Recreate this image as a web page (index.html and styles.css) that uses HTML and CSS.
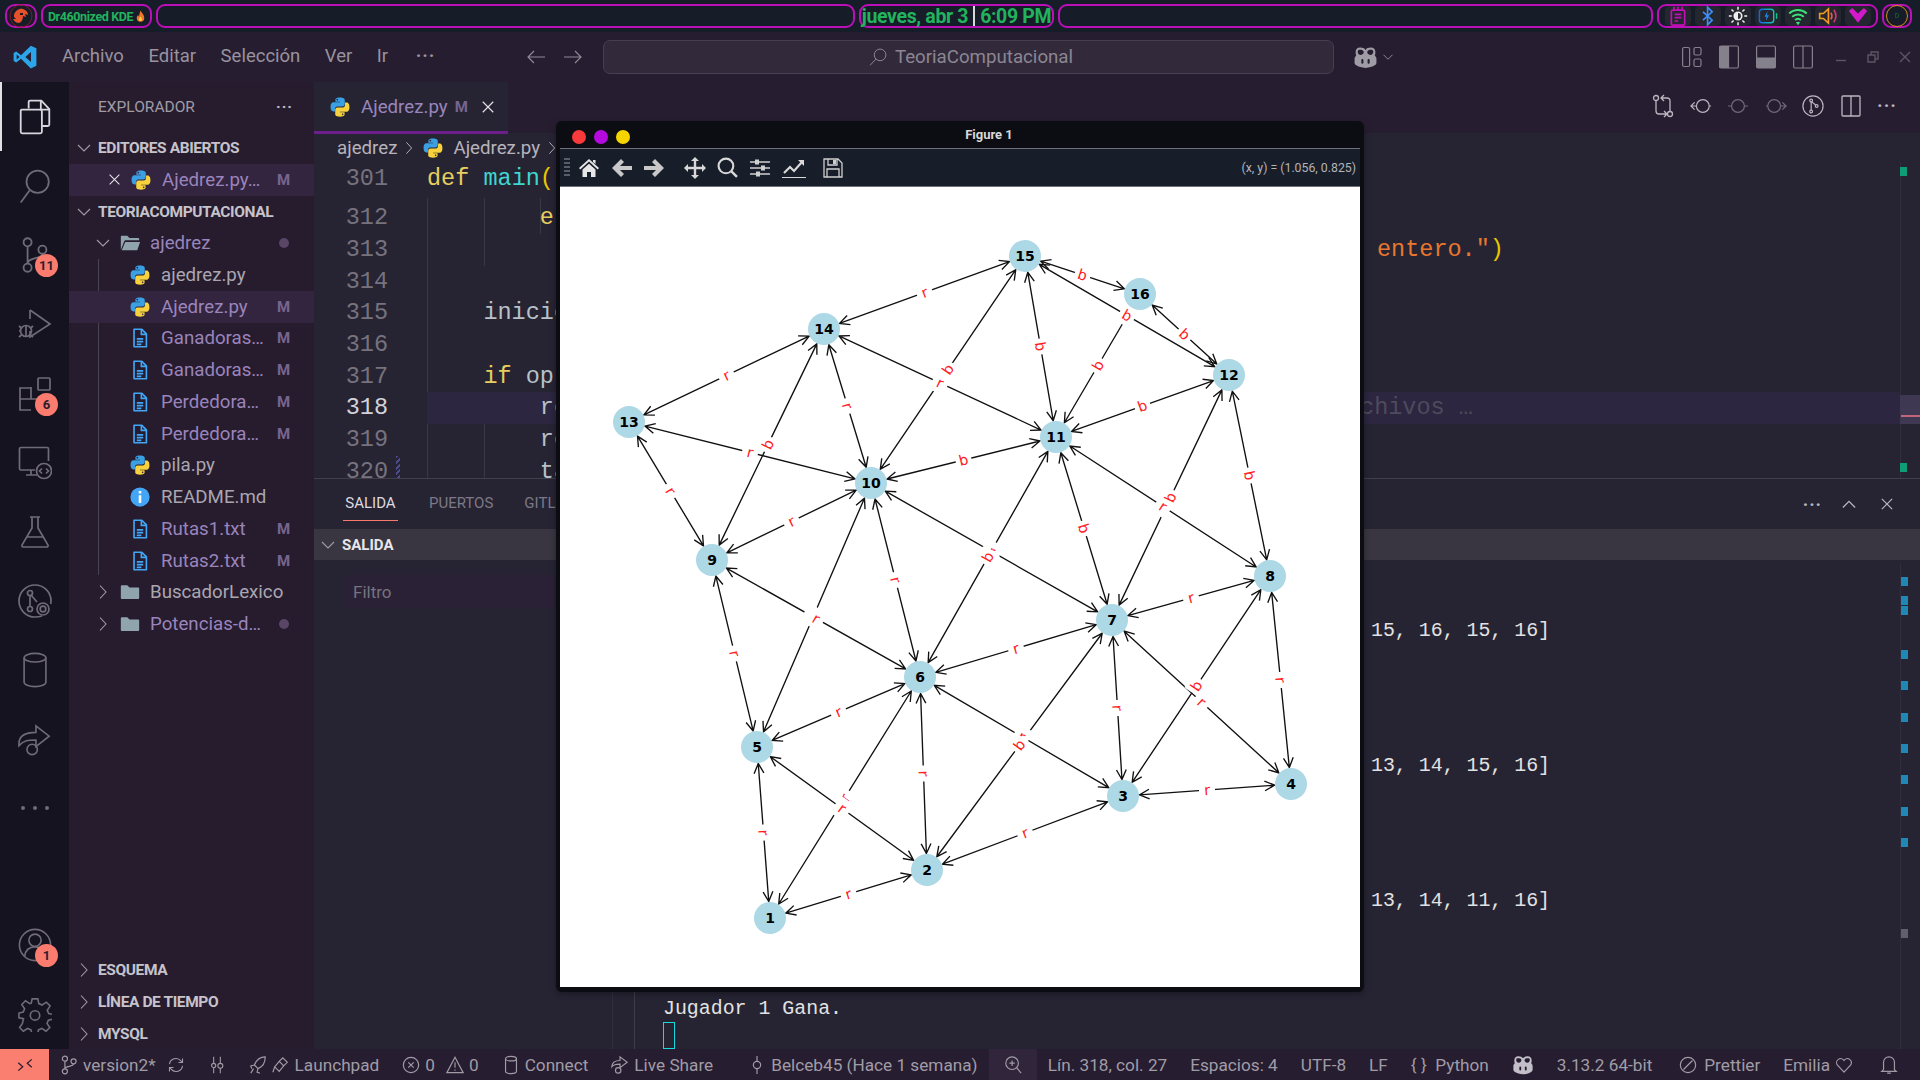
FILE: index.html
```html
<!DOCTYPE html>
<html lang="es">
<head>
    <meta charset="UTF-8">
    <title>TeoriaComputacional</title>
    <link rel="stylesheet" href="styles.css">
</head>
<body>
    <svg class="sprite" xmlns="http://www.w3.org/2000/svg">
        <symbol id="i-python" viewBox="0 0 24 24">
            <path fill="#3b9fe3" d="M11.9 1.5c-5.2 0-4.9 2.3-4.9 2.3v2.4h5v.7H5.1S1.7 6.5 1.7 11.8s3 5.1 3 5.1h1.8v-2.5s-.1-3 2.9-3h5s2.8 0 2.8-2.7V4.2s.4-2.7-5.300-2.700zM9.100 3.100a.9.9 0 1 1 0 1.800.9.9 0 0 1 0-1.800z"/>
            <path fill="#f7d23e" d="M12.100 22.500c5.200 0 4.900-2.300 4.900-2.300v-2.400h-5v-.7h6.900s3.400.4 3.400-4.900-3-5.100-3-5.100h-1.800v2.500s.1 3-2.900 3h-5s-2.800 0-2.800 2.700v4.500s-.4 2.700 5.300 2.700zm2.800-1.600a.9.9 0 1 1 0-1.800.9.9 0 0 1 0 1.800z"/>
        </symbol>
        <symbol id="i-file" viewBox="0 0 24 24">
            <path fill="none" stroke="#42a5f5" stroke-width="1.800" stroke-linejoin="round" d="M5.500 2.500h8.500l5 5v14h-13.500z"/>
            <path fill="none" stroke="#42a5f5" stroke-width="1.800" d="M13.500 2.500v5.500h5.500M8.500 13h7M8.500 16h7M8.500 19h5"/>
        </symbol>
        <symbol id="i-info" viewBox="0 0 24 24">
            <circle cx="12" cy="12" r="10.500" fill="#42a5f5"/>
            <path fill="#fff" d="M10.600 5.500h2.800v2.800h-2.800zM10.600 10h2.800v8.500h-2.800z"/>
        </symbol>
        <symbol id="i-folder" viewBox="0 0 24 24">
            <path fill="#90a4ae" d="M2 5.500a1 1 0 0 1 1-1h6l2.500 2.500h9.500a1 1 0 0 1 1 1v10.500a1 1 0 0 1-1 1H3a1 1 0 0 1-1-1z"/>
        </symbol>
        <symbol id="i-folder-open" viewBox="0 0 24 24">
            <path fill="#90a4ae" d="M2 5a1 1 0 0 1 1-1h6l2.500 2.500h9.500a1 1 0 0 1 1 1V9H7.500a2 2 0 0 0-1.900 1.400L2 19.500z"/>
            <path fill="#90a4ae" d="M6.800 11h16.200l-3 8.500a1 1 0 0 1-1 .5H3z"/>
        </symbol>
        <symbol id="i-chev-down" viewBox="0 0 16 16">
            <path fill="none" stroke="currentColor" stroke-width="1.100" d="M2 5l6 6 6-6"/>
        </symbol>
        <symbol id="i-chev-right" viewBox="0 0 16 16">
            <path fill="none" stroke="currentColor" stroke-width="1.100" d="M5 1.500l6 6.500-6 6.500"/>
        </symbol>
        <symbol id="i-close" viewBox="0 0 16 16">
            <path fill="none" stroke="currentColor" stroke-width="1.300" d="M2 2l12 12M14 2L2 14"/>
        </symbol>
        <symbol id="i-copilot" viewBox="0 0 24 24">
            <path fill="currentColor" fill-rule="evenodd" d="M7 2.500c-3 0-4.500 1.800-4.500 4.500 0 1.200.2 2.200.6 3-.8.800-1.600 1.800-1.600 3v4c0 1 .5 1.700 1.300 2.300 2.500 1.700 5.600 2.700 9.200 2.700s6.700-1 9.200-2.700c.8-.6 1.300-1.300 1.300-2.300v-4c0-1.200-.8-2.200-1.600-3 .4-.8.600-1.800.6-3 0-2.700-1.500-4.500-4.500-4.500-2.200 0-4 .8-5 2.200-1-1.400-2.800-2.200-5-2.200zM5 5c1.700-.7 4.700-.4 5.200 1.300.3 1.500-.4 3.200-3 3.200C5 9.500 3.900 7 5 5zm14 0c1.100 2 0 4.500-2.200 4.500-2.600 0-3.300-1.700-3-3.200C14.300 4.600 17.300 4.300 19 5zM9 13.500a1 1 0 0 1 1 1v2.500a1 1 0 1 1-2 0v-2.500a1 1 0 0 1 1-1zm6 0a1 1 0 0 1 1 1v2.500a1 1 0 1 1-2 0v-2.500a1 1 0 0 1 1-1z"/>
        </symbol>
        <symbol id="i-search" viewBox="0 0 24 24">
            <circle cx="14.500" cy="9.500" r="7" fill="none" stroke="currentColor" stroke-width="1.200"/>
            <path fill="none" stroke="currentColor" stroke-width="1.200" d="M9.500 14.500L2.500 22"/>
        </symbol>
    </svg>

    <header class="topbar">
        <div class="pill pill-logo">
            <svg class="dragon" viewBox="0 0 24 24"><circle cx="12" cy="12" r="11" fill="none" stroke="#7a1c24" stroke-width="1"/><path fill="#e8502c" d="M5 11c1-4 5-7 9-6 3 1 5 3 5 6l-3-1 1 3-3-1c0 3-1 6-4 7-3 0-5-2-6-4l3 0-2-2z"/><path fill="#1a1a22" d="M11 9h3v2h-3z"/></svg>
        </div>
        <div class="pill pill-brand"><span>Dr460nized KDE</span><svg class="flame" viewBox="0 0 12 16"><path fill="#f2762a" d="M6 0c1 3 5 5 5 10a5 5 0 0 1-10 0c0-2 1-3 2-4 0 1 .5 2 1 2 .5-3 1-5 2-8z"/><path fill="#fbd34a" d="M6 8c.5 1.500 2 2.500 2 4a2 2 0 0 1-4 0c0-1.500 1.500-2.500 2-4z"/></svg></div>
        <div class="pill pill-empty pill-a"></div>
        <div class="pill pill-clock"><span>jueves, abr 3</span><i class="clock-sep"></i><span>6:09 PM</span></div>
        <div class="pill pill-empty pill-b"></div>
        <div class="pill pill-tray">
            <span class="tray-icon"><svg viewBox="0 0 24 24"><path fill="none" stroke="#c40fb8" stroke-width="2" d="M6 5h12a2 2 0 0 1 2 2v14a2 2 0 0 1-2 2H6a2 2 0 0 1-2-2V7a2 2 0 0 1 2-2zM7 1v4M12 1v4M17 1v4"/><path stroke="#c40fb8" stroke-width="2" d="M8 10h8M8 14h8M8 18h4"/></svg></span>
            <span class="tray-icon"><svg viewBox="0 0 24 24"><path fill="none" stroke="#3f8ef5" stroke-width="2" d="M6 7l11 10-5.500 5.500V1.500L17 7 6 17"/></svg></span>
            <span class="tray-icon"><svg viewBox="0 0 24 24"><circle cx="12" cy="12" r="5.500" fill="#eee"/><path fill="#2a2c34" d="M12 8.500a3.500 3.500 0 0 1 0 7z"/><path stroke="#eee" stroke-width="1.800" d="M12 1v3.500M12 19.500V23M1 12h3.500M19.500 12H23M4.200 4.200l2.500 2.500M17.300 17.300l2.500 2.500M4.200 19.800l2.500-2.500M17.300 6.700l2.500-2.500"/></svg></span>
            <span class="tray-icon"><svg viewBox="0 0 28 24"><defs><linearGradient id="batt" x1="0" x2="1" y1="0" y2="0"><stop offset="0" stop-color="#1466e8"/><stop offset="1" stop-color="#14c2b0"/></linearGradient></defs><rect x="2" y="2.500" width="20" height="19" rx="4" fill="none" stroke="url(#batt)" stroke-width="2"/><path fill="#1e88e5" d="M13.500 5.500l-4.500 7.500h3l-1 5.500 4.500-7.500h-3z"/><rect x="25" y="8" width="2" height="8" fill="#14c28a"/></svg></span>
            <span class="tray-icon"><svg viewBox="0 0 24 24"><path fill="none" stroke="#3ee07a" stroke-width="2.400" d="M1.500 9c6-5.500 15-5.500 21 0M5 13c4-3.700 10-3.700 14 0M8.500 16.800c2-1.800 5-1.800 7 0"/><path fill="#3ee07a" d="M12 23l-2.500-3.500c1.500-1 3.500-1 5 0z"/></svg></span>
            <span class="tray-icon"><svg viewBox="0 0 24 24"><path fill="none" stroke="#f39a1e" stroke-width="2" d="M2 9h4.500L12.500 3.500v17L6.500 15H2z"/><path fill="none" stroke="#e8564c" stroke-width="2" d="M15.500 8c1.500 2.500 1.500 5.500 0 8"/><path fill="none" stroke="#d0357a" stroke-width="2" d="M19 4.500c3 4.500 3 10.500 0 15"/></svg></span>
            <span class="tray-icon"><svg viewBox="0 0 24 24"><path fill="#d21ac8" d="M1 6l4-3.500 7 6.500 7-6.500L23 6 12 20z"/></svg></span>
        </div>
        <div class="pill pill-user"><span class="user-ring">D</span></div>
    </header>

    <div class="titlebar">
        <svg class="vs-logo" viewBox="0 0 24 24"><path fill="#2ba5ea" fill-rule="evenodd" d="M17.400 1.500L22.500 4v16l-5.100 2.500L8.300 13.700 3.900 17 1.500 15.800V8.200L3.900 7l4.400 3.300zM17.500 7.400L12.300 12l5.200 4.600zM4.300 9.600v4.800L6.900 12z"/></svg>
        <nav class="menu">
            <span>Archivo</span><span>Editar</span><span>Selección</span><span>Ver</span><span>Ir</span><span class="menu-dots">···</span>
        </nav>
        <div class="nav-arrows">
            <svg viewBox="0 0 18 14"><path fill="none" stroke="currentColor" stroke-width="1.200" d="M18 7H1M7 1L1 7l6 6"/></svg>
            <svg viewBox="0 0 18 14"><path fill="none" stroke="currentColor" stroke-width="1.200" d="M0 7h17M11 1l6 6-6 6"/></svg>
        </div>
        <div class="command">
            <svg class="command-icon"><use href="#i-search"/></svg>
            <span>TeoriaComputacional</span>
        </div>
        <div class="copilot">
            <svg class="copilot-icon"><use href="#i-copilot"/></svg>
            <svg class="copilot-chev"><use href="#i-chev-down"/></svg>
        </div>
        <div class="layout-icons">
            <svg viewBox="0 0 20 22"><rect x=".6" y="1.500" width="7" height="19" rx="1.500"/><rect x="12" y="1.500" width="7" height="7.500" rx="1.500"/><rect x="12" y="13" width="7" height="7.500" rx="1.500"/></svg>
            <svg viewBox="0 0 20 24"><rect x=".6" y="1" width="18.800" height="22" rx="1.500"/><path class="fill" d="M1 1.500h8.500v21H1z"/></svg>
            <svg viewBox="0 0 20 24"><rect x=".6" y="1" width="18.800" height="22" rx="1.500"/><path class="fill" d="M1 13h18v9.500H1z"/></svg>
            <svg viewBox="0 0 20 24"><rect x=".6" y="1" width="18.800" height="22" rx="1.500"/><path d="M10 1v22"/></svg>
        </div>
        <div class="window-buttons">
            <svg viewBox="0 0 12 12"><path d="M1 9.500h10"/></svg>
            <svg viewBox="0 0 12 12"><path d="M1 4h7v7H1zM4 4V1h7v7H8"/></svg>
            <svg viewBox="0 0 12 12"><path d="M1 1l10 10M11 1L1 11"/></svg>
        </div>
    </div>

    <div class="workbench">
        <aside class="activity">
            <div class="act active"><svg viewBox="0 0 30 34"><path d="M9 9V3a1.500 1.500 0 0 1 1.500-1.500H21l7.500 8V24a1.500 1.500 0 0 1-1.500 1.500h-5.500"/><path d="M20.500 1.500v8.500h8"/><path d="M2.500 10H20a1.500 1.500 0 0 1 1.500 1.500V31a1.500 1.500 0 0 1-1.500 1.500H3A1.500 1.500 0 0 1 1.500 31V11a1 1 0 0 1 1-1z"/></svg></div>
            <div class="act"><svg viewBox="0 0 30 34"><circle cx="17.500" cy="13" r="10.500"/><path d="M10 21L1.500 32.500"/></svg></div>
            <div class="act"><svg viewBox="0 0 30 34"><circle cx="8" cy="5" r="3.800"/><circle cx="8" cy="29" r="3.800"/><circle cx="22" cy="12" r="3.800"/><path d="M8 9v16M22 16c0 5-14 3-14 9"/></svg><b class="badge">11</b></div>
            <div class="act"><svg viewBox="0 0 34 34"><path d="M12 3l20 14-20 13v-6"/><path d="M12 3v9"/><circle cx="8" cy="24" r="5.500"/><path d="M1 19l3 2.500M1 24h2M1 30l3-2.500M15 19l-3 2.500M15 30l-3-2.500M8 19v10"/></svg></div>
            <div class="act"><svg viewBox="0 0 34 34"><path d="M2 12h11v11H2zM13 23h11v11M2 23v11h11M13 12v-1"/><rect x="20" y="2" width="12" height="12" rx="1"/></svg><b class="badge">6</b></div>
            <div class="act"><svg viewBox="0 0 34 34"><path d="M17 24H3a1.500 1.500 0 0 1-1.500-1.500V3A1.500 1.500 0 0 1 3 1.500h26A1.500 1.500 0 0 1 30.500 3v12M8 29h11M13 24v5"/><circle cx="26" cy="25" r="7.500"/><path d="M24 22.500l-2.500 2.500 2.500 2.500M28 22.500l2.500 2.500-2.500 2.500"/></svg></div>
            <div class="act"><svg viewBox="0 0 34 34"><path d="M12 2h10M14 2v11L4 30a1.500 1.500 0 0 0 1.500 2h23a1.500 1.500 0 0 0 1.500-2L20 13V2M8.500 22h17"/></svg></div>
            <div class="act"><svg viewBox="0 0 34 34"><path d="M24 32c-2 .7-4.500 1-7 1a16 16 0 1 1 16-16c0 1-.1 2-.3 3"/><circle cx="12" cy="9" r="2.500"/><circle cx="12" cy="25" r="2.500"/><path d="M12 11v12M13 11l6 7"/><circle cx="25" cy="25" r="6"/><circle cx="25" cy="25" r="2.800"/></svg></div>
            <div class="act"><svg viewBox="0 0 34 38"><ellipse cx="17" cy="6" rx="11.500" ry="4.500"/><path d="M5.500 6v26c0 2.500 5 4.500 11.500 4.500S28.500 34.500 28.500 32V6"/></svg></div>
            <div class="act"><svg viewBox="0 0 36 36"><path d="M1 23c0-8 6-12 18-12V4l14 11-14 11v-7c-8 0-13 0-18 6z"/><circle cx="15" cy="29" r="5.500"/></svg></div>
            <div class="act act-dots"><i></i><i></i><i></i></div>
            <div class="act-spacer"></div>
            <div class="act"><svg viewBox="0 0 36 36"><circle cx="18" cy="18" r="16.500"/><circle cx="18" cy="13" r="6.500"/><path d="M7 30c1-7 5-10 11-10s10 3 11 10"/></svg><b class="badge badge-low">1</b></div>
            <div class="act"><svg viewBox="0 0 36 36"><path d="M15 2h6l1 5 3.500 1.500 4.500-3 4 4-3 4.500 1.500 3.500 4.500 1v5l-4.800 1-1.500 3.500 3 4.300-4 4-4.500-3-3.500 1.500-1 4.500h-6l-1-4.500-3.500-1.500-4.500 3-4-4 3-4.300L5.800 23 1 22v-5l4.500-1L7 12.500l-3-4.500 4-4 4.500 3L14 6.500z"/><circle cx="18" cy="19.500" r="5"/></svg></div>
        </aside>

        <aside class="sidebar">
            <div class="side-head"><span>EXPLORADOR</span><span class="side-dots">···</span></div>
            <div class="sec"><svg class="chev"><use href="#i-chev-down"/></svg><span>EDITORES ABIERTOS</span></div>
            <div class="row row-sel open-row">
                <svg class="row-x"><use href="#i-close"/></svg>
                <svg class="ficon"><use href="#i-python"/></svg>
                <span class="name mod">Ajedrez.py…</span><span class="m">M</span>
            </div>
            <div class="sec"><svg class="chev"><use href="#i-chev-down"/></svg><span>TEORIACOMPUTACIONAL</span></div>
            <div class="tree">
                <i class="tree-guide"></i>
                <div class="row folder-row">
                    <svg class="chev"><use href="#i-chev-down"/></svg>
                    <svg class="dicon"><use href="#i-folder-open"/></svg>
                    <span class="name mod">ajedrez</span><i class="dot"></i>
                </div>
                <div class="row file-row"><svg class="ficon"><use href="#i-python"/></svg><span class="name">ajedrez.py</span></div>
                <div class="row file-row row-sel"><svg class="ficon"><use href="#i-python"/></svg><span class="name mod">Ajedrez.py</span><span class="m">M</span></div>
                <div class="row file-row"><svg class="ficon"><use href="#i-file"/></svg><span class="name mod">Ganadoras…</span><span class="m">M</span></div>
                <div class="row file-row"><svg class="ficon"><use href="#i-file"/></svg><span class="name mod">Ganadoras…</span><span class="m">M</span></div>
                <div class="row file-row"><svg class="ficon"><use href="#i-file"/></svg><span class="name mod">Perdedora…</span><span class="m">M</span></div>
                <div class="row file-row"><svg class="ficon"><use href="#i-file"/></svg><span class="name mod">Perdedora…</span><span class="m">M</span></div>
                <div class="row file-row"><svg class="ficon"><use href="#i-python"/></svg><span class="name">pila.py</span></div>
                <div class="row file-row"><svg class="ficon"><use href="#i-info"/></svg><span class="name">README.md</span></div>
                <div class="row file-row"><svg class="ficon"><use href="#i-file"/></svg><span class="name mod">Rutas1.txt</span><span class="m">M</span></div>
                <div class="row file-row"><svg class="ficon"><use href="#i-file"/></svg><span class="name mod">Rutas2.txt</span><span class="m">M</span></div>
                <div class="row folder-row"><svg class="chev"><use href="#i-chev-right"/></svg><svg class="dicon"><use href="#i-folder"/></svg><span class="name">BuscadorLexico</span></div>
                <div class="row folder-row"><svg class="chev"><use href="#i-chev-right"/></svg><svg class="dicon"><use href="#i-folder"/></svg><span class="name mod">Potencias-d…</span><i class="dot"></i></div>
            </div>
            <div class="side-bottom">
                <div class="sec"><svg class="chev"><use href="#i-chev-right"/></svg><span>ESQUEMA</span></div>
                <div class="sec"><svg class="chev"><use href="#i-chev-right"/></svg><span>LÍNEA DE TIEMPO</span></div>
                <div class="sec"><svg class="chev"><use href="#i-chev-right"/></svg><span>MYSQL</span></div>
            </div>
        </aside>

        <main class="main">
            <div class="tabs">
                <div class="tab">
                    <svg class="ficon"><use href="#i-python"/></svg>
                    <span class="mod">Ajedrez.py</span><span class="m">M</span>
                    <svg class="tab-x"><use href="#i-close"/></svg>
                </div>
                <div class="actions">
                    <svg viewBox="0 0 22 24"><circle cx="4" cy="4" r="2.500"/><circle cx="18" cy="20" r="2.500"/><path d="M4 7v10c0 2 1 3 3 3h8M18 17V7c0-2-1-3-3-3H9M12 1L9 4l3 3M12 17l3 3-3 3"/></svg>
                    <svg viewBox="0 0 24 24"><circle cx="14" cy="12" r="7"/><path d="M7 12H1M5 8l-4 4 4 4M21 12h2"/></svg>
                    <svg class="dim" viewBox="0 0 24 24"><circle cx="12" cy="12" r="7"/><path d="M5 12H1M19 12h4"/></svg>
                    <svg class="dim" viewBox="0 0 24 24"><circle cx="10" cy="12" r="7"/><path d="M17 12h6M19 8l4 4-4 4M3 12H1"/></svg>
                    <svg viewBox="0 0 24 24"><circle cx="12" cy="12" r="11"/><circle cx="10" cy="6" r="1.500"/><circle cx="10" cy="18" r="1.500"/><circle cx="16" cy="12" r="1.500"/><path d="M10 7.500v9M10.500 7.500L15 11"/></svg>
                    <svg viewBox="0 0 20 24"><rect x="1" y="2" width="18" height="20" rx="1"/><path d="M10 2v20"/></svg>
                    <span class="actions-dots">···</span>
                </div>
            </div>
            <div class="crumbs">
                <span>ajedrez</span><svg class="crumb-chev"><use href="#i-chev-right"/></svg>
                <svg class="ficon"><use href="#i-python"/></svg><span>Ajedrez.py</span><svg class="crumb-chev"><use href="#i-chev-right"/></svg>
            </div>
            <section class="editor">
                <div class="line sticky"><span class="ln">301</span><span class="code"><span class="kw">def</span> <span class="fn">main</span><span class="par">(</span></span></div>
                <div class="lines">
                    <i class="guide guide-a"></i><i class="guide guide-b"></i><i class="guide guide-c"></i><i class="guide guide-d"></i>
                    <div class="line"><span class="ln">312</span><span class="code">        <span class="kw">else:</span></span></div>
                    <div class="line"><span class="ln">313</span><span class="code"><span class="str col-entero">entero."<span class="par">)</span></span></span></div>
                    <div class="line"><span class="ln">314</span><span class="code"></span></div>
                    <div class="line"><span class="ln">315</span><span class="code">    inicio</span></div>
                    <div class="line"><span class="ln">316</span><span class="code"></span></div>
                    <div class="line"><span class="ln">317</span><span class="code">    <span class="kw">if</span> op</span></div>
                    <div class="line current"><span class="ln">318</span><span class="code">        re<span class="ghost">chivos …</span></span></div>
                    <div class="line"><span class="ln">319</span><span class="code">        re</span></div>
                    <div class="line"><span class="ln">320</span><i class="dirty"></i><span class="code">        ta</span></div>
                </div>
                <i class="ruler"></i>
                <i class="mark mark-top"></i>
                <i class="mark mark-bottom"></i>
                <i class="mark-cur"></i>
                <i class="mark-red"></i>
            </section>
            <section class="panel">
                <div class="panel-head">
                    <span class="ptab on">SALIDA</span><span class="ptab">PUERTOS</span><span class="ptab">GITLENS</span>
                    <div class="panel-actions">
                        <span class="actions-dots panel-dots">···</span>
                        <svg viewBox="0 0 16 10"><path d="M1 9l7-7 7 7"/></svg>
                        <svg viewBox="0 0 14 14"><path d="M1 1l12 12M13 1L1 13"/></svg>
                    </div>
                </div>
                <div class="panel-sec"><svg class="chev"><use href="#i-chev-down"/></svg><span>SALIDA</span></div>
                <div class="panel-body">
                    <div class="filter-col"><div class="filter">Filtro</div></div>
                    <div class="term">
                        <div class="term-row far first">15, 16, 15, 16]</div>
                        <div class="term-row far">13, 14, 15, 16]</div>
                        <div class="term-row far">13, 14, 11, 16]</div>
                        <div class="term-row last">Jugador 1 Gana.</div>
                        <i class="cursor"></i>
                    </div>
                    <div class="term-marks">
                        <i class="t1"></i><i class="t2"></i><i class="t3"></i><i class="t4"></i><i class="t5"></i><i class="t6"></i><i class="t7"></i><i class="t8"></i><i class="t9"></i><i class="t10"></i><i class="t11"></i>
                    </div>
                </div>
            </section>
        </main>
    </div>

    <footer class="status">
        <div class="remote"><svg viewBox="0 0 16 16"><path fill="none" stroke="#2a1c2e" stroke-width="1.100" d="M2 13l4-3.500L2 6M14 3l-4 3.500 4 3.500"/></svg></div>
        <div class="st-group">
            <span class="st"><svg viewBox="0 0 18 22"><circle cx="4.500" cy="4" r="2.800"/><circle cx="4.500" cy="18" r="2.800"/><circle cx="14" cy="7" r="2.800"/><path d="M4.500 7v8M14 10c0 3-9.500 2-9.500 5"/></svg>version2*<svg class="after" viewBox="0 0 22 22"><path d="M3 10a8 8 0 0 1 14-4l2 2M19 12a8 8 0 0 1-14 4l-2-2M19 3v5h-5M3 19v-5h5"/></svg></span>
            <span class="st"><svg viewBox="0 0 18 24"><path d="M5 2v8M5 15v7M13 2v8M13 16v6"/><circle cx="5" cy="12.500" r="2.500"/><circle cx="13" cy="13" r="3"/></svg></span>
            <span class="st"><svg viewBox="0 0 20 22"><path d="M18 2c-6 0-10 4-12 9l4 4c5-2 8-6 8-13zM6 11l-4 1 1 3M10 15l-1 4 3 1M5 15l-3 5"/></svg><svg viewBox="0 0 20 22"><path d="M3 13l5-6 5 5-5 6zM8 7l4-4 5 5-4 4M3 13l-2 6"/></svg>Launchpad</span>
            <span class="st"><svg viewBox="0 0 20 20"><circle cx="10" cy="10" r="8.500"/><path d="M7 7l6 6M13 7l-6 6"/></svg>0<svg class="after" viewBox="0 0 20 20"><path d="M10 1.500L19 18.500H1zM10 7v6M10 15v1.500"/></svg>0</span>
            <span class="st"><svg viewBox="0 0 16 22"><ellipse cx="8" cy="4" rx="6" ry="2.500"/><path d="M2 4v14c0 1.500 2.500 2.500 6 2.500s6-1 6-2.500V4"/></svg>Connect</span>
            <span class="st"><svg viewBox="0 0 20 22"><path d="M1 13c0-4 3-7 9-7V2l8 6-8 6v-4c-4 0-7 0-9 3z"/><circle cx="8" cy="17" r="3"/></svg>Live Share</span>
            <span class="st st-blame"><svg viewBox="0 0 14 22"><circle cx="7" cy="11" r="4"/><path d="M7 1v6M7 15v6"/></svg>Belceb45 (Hace 1 semana)</span>
            <span class="st st-hover"><svg viewBox="0 0 20 22"><circle cx="9" cy="9" r="7"/><path d="M14 14l5 6M9 6v6M6 9h6"/></svg></span>
        </div>
        <div class="st-group st-right">
            <span class="st">Lín. 318, col. 27</span>
            <span class="st">Espacios: 4</span>
            <span class="st">UTF-8</span>
            <span class="st">LF</span>
            <span class="st">{ }&nbsp; Python</span>
            <span class="st"><svg class="solid"><use href="#i-copilot"/></svg></span>
            <span class="st">3.13.2 64-bit</span>
            <span class="st st-prettier"><svg viewBox="0 0 20 20"><circle cx="10" cy="10" r="8.500"/><path d="M5 15L15 5"/></svg>Prettier</span>
            <span class="st">Emilia<svg viewBox="0 0 20 18"><path d="M10 17L2.500 9a4.500 4.500 0 0 1 7.500-5 4.500 4.500 0 0 1 7.500 5z"/></svg></span>
            <span class="st st-bell"><svg viewBox="0 0 18 22"><path d="M3 16V8a6 6 0 0 1 12 0v8l2 2H1zM7 20h4"/></svg></span>
        </div>
    </footer>

    <div class="figure">
        <div class="fig-title">
            <div class="fig-dots"><i class="d-red"></i><i class="d-purple"></i><i class="d-yellow"></i></div>
            <span>Figure 1</span>
        </div>
        <div class="fig-tools">
            <i class="grip"></i>
            <svg class="tool t-home" viewBox="0 0 20 18"><path fill="#e6e6e6" d="M10 0l10 9-1.300 1.400L10 2.600 1.300 10.400 0 9zM3.500 10.500L10 4.700l6.500 5.800V18h-4.500v-5h-4v5H3.500zM14 1h2.500v4L14 3z"/></svg>
            <svg class="tool t-back" viewBox="0 0 20 18"><path fill="#c8c8c8" d="M9 0l3 3-4 4h12v4H8l4 4-3 3-9-9z"/></svg>
            <svg class="tool t-fwd" viewBox="0 0 20 18"><path fill="#c8c8c8" d="M11 0L8 3l4 4H0v4h12l-4 4 3 3 9-9z"/></svg>
            <svg class="tool t-move" viewBox="0 0 22 22"><path fill="#d8d8d8" d="M11 0l4 4h-2.800v5.800H18V7l4 4-4 4v-2.800h-5.800V18H15l-4 4-4-4h2.800v-5.800H4V15l-4-4 4-4v2.800h5.800V4H7z"/></svg>
            <svg class="tool t-zoom" viewBox="0 0 20 20"><circle cx="8.500" cy="8.500" r="7" fill="none" stroke="#d8d8d8" stroke-width="2"/><path stroke="#d8d8d8" stroke-width="2.400" d="M13.500 13.500L19 19"/></svg>
            <svg class="tool t-sliders" viewBox="0 0 20 20"><path stroke="#cfcfcf" stroke-width="1.400" d="M0 4h20M0 10h20M0 16h20"/><path fill="#cfcfcf" d="M5 1.500h4v5H5zM11 7.500h4v5h-4zM6 13.500h4v5H6z"/></svg>
            <svg class="tool t-chart" viewBox="0 0 24 20"><path fill="none" stroke="#d8d8d8" stroke-width="1" d="M0 19.500h24"/><path fill="none" stroke="#d8d8d8" stroke-width="2.200" d="M2 15l6-6 4 4 8-9"/><path fill="#d8d8d8" d="M16 2h6v6z"/></svg>
            <svg class="tool t-save" viewBox="0 0 20 20"><path fill="none" stroke="#cfcfcf" stroke-width="1.300" d="M1 1h14l4 4v14H1zM5 1v6h9V1M4 19v-8h12v8"/><path fill="#cfcfcf" d="M10 2h3v4h-3z"/></svg>
            <span class="coords">(x, y) = (1.056, 0.825)</span>
        </div>
        <svg class="fig-canvas" id="graph" viewBox="0 0 800 800" xmlns="http://www.w3.org/2000/svg"></svg>
    </div>

    <script src="graph.js"></script>
</body>
</html>
```

FILE: styles.css
```css
* {
    box-sizing: border-box;
}

html, body {
    margin: 0;
    height: 100%;
}

body {
    width: 1920px;
    height: 1080px;
    overflow: hidden;
    display: flex;
    flex-direction: column;
    position: relative;
    background-color: #271d30;
    color: #a8a4ae;
    font-family: Roboto, "Noto Sans", sans-serif;
    font-size: 18.7px;
}

i {
    display: block;
}

.sprite {
    position: absolute;
    width: 0;
    height: 0;
}

/* top desktop panel */
.topbar {
    height: 32px;
    flex: none;
    display: flex;
    gap: 4px;
    padding: 4px 5px;
    background-color: #161c28;
}

.pill {
    height: 24px;
    border: 2px solid #bb10b8;
    border-radius: 9px;
    display: flex;
    align-items: center;
    justify-content: center;
    flex: none;
}

.pill-logo {
    width: 32px;
    border-radius: 10px;
}

.dragon {
    width: 24px;
    height: 24px;
    flex: none;
}

.pill-brand {
    width: 111px;
    gap: 3px;
    color: #22b35e;
    font-size: 12.5px;
    font-weight: 700;
    letter-spacing: -0.4px;
}

.flame {
    width: 9px;
    height: 13px;
}

.pill-a {
    width: 699px;
}

.pill-clock {
    width: 195px;
    gap: 5px;
    color: #22b35e;
    font-size: 19.5px;
    font-weight: 700;
    letter-spacing: -0.35px;
    white-space: nowrap;
}

.clock-sep {
    width: 2px;
    height: 20px;
    background-color: #d8d8d8;
}

.pill-b {
    width: 595px;
}

.pill-tray {
    width: 221px;
    gap: 4px;
}

.tray-icon {
    width: 26px;
    height: 20px;
    border-radius: 5px;
    background-color: #24272f;
    display: flex;
    align-items: center;
    justify-content: center;
}

.tray-icon svg {
    width: 20px;
    height: 22px;
    overflow: visible;
}

.pill-user {
    width: 30px;
}

.user-ring {
    width: 22px;
    height: 22px;
    border-radius: 50%;
    border: 1.5px solid #d98a1e;
    color: #1e6b45;
    font-size: 7px;
    display: flex;
    align-items: center;
    justify-content: center;
}

/* title bar */
.titlebar {
    height: 50px;
    flex: none;
    display: flex;
    align-items: center;
    background-color: #271d30;
}

.vs-logo {
    width: 26px;
    height: 26px;
    margin-left: 12px;
    flex: none;
}

.menu {
    display: flex;
    gap: 24.5px;
    margin-left: 24px;
    width: 465px;
    flex: none;
    padding-bottom: 2px;
    font-size: 18.5px;
    color: #98939f;
}

.menu-dots {
    margin-left: 3px;
    letter-spacing: 1px;
    font-weight: 700;
}

.nav-arrows {
    display: flex;
    gap: 19px;
    width: 76px;
    flex: none;
    color: #8d8995;
}

.nav-arrows svg {
    width: 18px;
    height: 14px;
    flex: none;
}

.command {
    width: 731px;
    height: 34px;
    flex: none;
    background-color: #322a3b;
    border: 1px solid #473f50;
    border-radius: 7px;
    display: flex;
    align-items: center;
    justify-content: center;
    gap: 7px;
    padding: 0 0 1px 4px;
    color: #8b8692;
}

.command-icon {
    width: 20px;
    height: 20px;
}

.copilot {
    display: flex;
    align-items: center;
    margin-left: 19px;
    width: 329px;
    flex: none;
    color: #a09ca6;
    gap: 4px;
}

.copilot-icon {
    width: 25px;
    height: 25px;
}

.copilot-chev {
    width: 12px;
    height: 12px;
}

.layout-icons {
    display: flex;
    align-items: center;
    gap: 17px;
    width: 153px;
    flex: none;
}

.layout-icons svg {
    width: 20px;
    height: 24px;
    fill: none;
    stroke: #85818c;
    stroke-width: 1.2;
}

.layout-icons .fill {
    fill: #85818c;
}

.window-buttons {
    display: flex;
    gap: 20px;
    align-items: center;
}

.window-buttons svg {
    width: 12px;
    height: 12px;
    fill: none;
    stroke: #5b5663;
    stroke-width: 1.4;
}

/* main split */
.workbench {
    flex: 1;
    min-height: 0;
    display: flex;
}

.activity {
    width: 69px;
    flex: none;
    display: flex;
    flex-direction: column;
    background-color: #15131f;
}

.act {
    height: 69.2px;
    flex: none;
    display: flex;
    align-items: center;
    justify-content: center;
    position: relative;
}

.act svg {
    width: 34px;
    height: 36px;
    fill: none;
    stroke: #6f6b78;
    stroke-width: 1.7;
}

.act.active {
    border-left: 2px solid #e2e0e6;
    padding-right: 2px;
}

.act.active svg {
    stroke: #d9d7dd;
}

.badge {
    position: absolute;
    left: 35px;
    top: 34px;
    width: 23px;
    height: 23px;
    border-radius: 50%;
    background-color: #fb7c6e;
    color: #2a1c2e;
    font-size: 13px;
    font-weight: 700;
    display: flex;
    align-items: center;
    justify-content: center;
}

.badge-low {
    top: 33px;
}

.act-dots {
    gap: 8px;
}

.act-dots i {
    width: 4px;
    height: 4px;
    border-radius: 50%;
    background-color: #6f6b78;
}

.act-spacer {
    flex: 1;
}

/* explorer */
.sidebar {
    width: 245px;
    flex: none;
    display: flex;
    flex-direction: column;
    background-color: #261c2e;
}

.side-head {
    height: 50px;
    flex: none;
    display: flex;
    align-items: center;
    justify-content: space-between;
    padding: 0 21px 0 29px;
    font-size: 15.5px;
    color: #a09ca6;
}

.side-dots {
    font-weight: 700;
    letter-spacing: 1px;
    color: #c2bfc8;
}

.sec {
    height: 31.75px;
    flex: none;
    display: flex;
    align-items: center;
    padding: 1px 0 0 7px;
    gap: 6px;
    font-size: 15.5px;
    font-weight: 700;
    letter-spacing: -0.4px;
    color: #c6c3cb;
}

.chev {
    width: 16px;
    height: 16px;
    flex: none;
    color: #a09ca6;
}

.row {
    height: 31.75px;
    display: flex;
    align-items: center;
    position: relative;
}

.row-sel {
    background-color: #33253f;
}

.row-x {
    width: 13px;
    height: 13px;
    margin-left: 39px;
    margin-right: 9px;
    color: #e8e6ea;
}

.ficon {
    width: 22px;
    height: 22px;
    flex: none;
}

.dicon {
    width: 22px;
    height: 22px;
    flex: none;
}

.name {
    margin-left: 10px;
    color: #aaa6b0;
    white-space: nowrap;
}

.name.mod, .mod {
    color: #9a84bc;
}

.m {
    position: absolute;
    left: 208px;
    font-size: 15px;
    font-weight: 700;
    color: #77658f;
}

.dot {
    position: absolute;
    left: 210px;
    width: 10px;
    height: 10px;
    border-radius: 50%;
    background-color: #594566;
}

.tree {
    position: relative;
}

.tree-guide {
    position: absolute;
    left: 29px;
    top: 32px;
    width: 1px;
    height: 316px;
    background-color: #4a4553;
}

.file-row {
    padding-left: 60px;
}

.folder-row {
    padding-left: 26px;
}

.folder-row .chev {
    margin-right: 8px;
}

.folder-row .name {
    margin-left: 9px;
}

.side-bottom {
    margin-top: auto;
}

/* editor */
.main {
    flex: 1;
    min-width: 0;
    display: flex;
    flex-direction: column;
    background-color: #262433;
}

.tabs {
    height: 51px;
    flex: none;
    display: flex;
    background-color: #271d30;
}

.tab {
    width: 194px;
    height: 52px;
    display: flex;
    align-items: center;
    padding-left: 15px;
    gap: 10px;
    background-color: #262433;
    border-bottom: 3px solid #6c1f8c;
}

.tab .m {
    position: static;
    margin-left: -3px;
}

.tab-x {
    width: 14px;
    height: 14px;
    margin-left: 3px;
    color: #e8e6ea;
}

.actions {
    margin-left: auto;
    display: flex;
    align-items: center;
    gap: 15.5px;
    padding-right: 23px;
    padding-bottom: 3px;
}

.actions svg {
    width: 22px;
    height: 24px;
    fill: none;
    stroke: #bab7c0;
    stroke-width: 1.3;
}

.actions svg.dim {
    stroke: #6f6b78;
}

.actions-dots {
    font-weight: 700;
    letter-spacing: 1px;
    color: #bab7c0;
}

.crumbs {
    height: 29px;
    flex: none;
    display: flex;
    align-items: center;
    padding-left: 23px;
    color: #b6b3bb;
}

.crumbs .ficon {
    margin-left: 6px;
    margin-right: 9px;
}

.crumb-chev {
    width: 14px;
    height: 18px;
    margin-left: 5px;
    color: #b6b3bb;
}

.editor {
    height: 316px;
    flex: none;
    position: relative;
    overflow: hidden;
    font-family: "Liberation Mono", monospace;
    font-size: 23.5px;
    color: #b8c0c8;
}

.line {
    height: 31.7px;
    display: flex;
    align-items: center;
    position: relative;
    white-space: pre;
}

.sticky {
    height: 40px;
    padding-bottom: 8px;
}

.ln {
    width: 74px;
    flex: none;
    text-align: right;
    color: #76727e;
}

.current .ln {
    color: #d4d2d8;
}

.code {
    margin-left: 39px;
}

.current {
    background: linear-gradient(#2c2640, #2c2640) 113px 0 / 1473px 100% no-repeat;
}

.kw {
    color: #e6cf5f;
}

.fn {
    color: #3fd6cf;
}

.par {
    color: #e6c800;
}

.str {
    color: #e9772e;
}

.col-entero {
    margin-left: 950px;
}

.ghost {
    margin-left: 792px;
    color: #4f4a5c;
}

.lines {
    position: relative;
}

.guide {
    position: absolute;
    width: 1px;
    background-color: #3a3843;
}

.guide-a {
    left: 113px;
    top: -4px;
    height: 280px;
}

.guide-b {
    left: 170px;
    top: -4px;
    height: 68px;
}

.guide-c {
    left: 226px;
    top: -4px;
    height: 36px;
}

.guide-d {
    left: 170px;
    top: 190px;
    height: 100px;
}

.dirty {
    position: absolute;
    left: 82px;
    top: 0;
    width: 4px;
    height: 100%;
    background: repeating-linear-gradient(135deg, #4a4a8c 0 2px, #262433 2px 4px);
}

.ruler {
    position: absolute;
    left: 1586px;
    top: 0;
    width: 1px;
    height: 100%;
    background-color: #302e3c;
}

.mark {
    position: absolute;
    left: 1586px;
    width: 7px;
    height: 9px;
    background-color: #0f9d78;
}

.mark-top {
    top: 5px;
}

.mark-bottom {
    top: 301px;
}

.mark-cur {
    position: absolute;
    left: 1586px;
    top: 233px;
    width: 20px;
    height: 29px;
    background-color: #3f3852;
}

.mark-red {
    position: absolute;
    left: 1587px;
    top: 253px;
    width: 19px;
    height: 2px;
    background-color: #c4647a;
}

/* bottom panel */
.panel {
    flex: 1;
    min-height: 0;
    display: flex;
    flex-direction: column;
    border-top: 1px solid #413f4a;
}

.panel-head {
    height: 50px;
    flex: none;
    display: flex;
    align-items: flex-start;
    padding-left: 29px;
    gap: 31px;
    font-size: 15px;
    color: #7d7986;
}

.ptab {
    height: 42px;
    display: flex;
    align-items: center;
    border-bottom: 1px solid transparent;
    padding: 6px 0 0;
}

.ptab.on {
    color: #dcdae0;
    border-bottom-color: #f8796c;
    width: 55px;
    justify-content: center;
}

.panel-actions {
    margin-left: auto;
    align-self: center;
    display: flex;
    align-items: center;
    gap: 24px;
    padding-right: 26px;
}

.panel-dots {
    margin-right: -4px;
    font-size: 18px;
}

.panel-actions svg {
    width: 14px;
    height: 12px;
    fill: none;
    stroke: #bab7c0;
    stroke-width: 1.4;
}

.panel-sec {
    height: 31px;
    flex: none;
    display: flex;
    align-items: center;
    gap: 6px;
    padding-left: 6px;
    background-color: #393642;
    font-size: 15px;
    font-weight: 700;
    color: #e8e6ea;
}

.panel-body {
    flex: 1;
    min-height: 0;
    display: flex;
}

.filter-col {
    width: 299px;
    flex: none;
    padding: 15px 0 0 29px;
    border-right: 1px solid #302e3c;
}

.filter {
    height: 33px;
    display: flex;
    align-items: center;
    padding-left: 10px;
    background-color: #2a2136;
    color: #77737f;
    font-size: 17px;
}

.term {
    width: 1264px;
    flex: none;
    margin-left: 21px;
    padding: 0 0 0 28px;
    border-left: 1px solid #3e3c47;
    font-family: "Liberation Mono", monospace;
    font-size: 19.9px;
    line-height: 27px;
    color: #e2e2e2;
    position: relative;
}

.term-row {
    margin-top: 108px;
    white-space: pre;
}

.term-row.first {
    margin-top: 57px;
}

.term-row.last {
    margin-top: 81px;
}

.term-row.far {
    margin-left: 708px;
}

.cursor {
    width: 12px;
    height: 27px;
    border: 1px solid #17d9e0;
}

.term-marks {
    width: 20px;
    flex: none;
    margin-left: 2px;
    position: relative;
    border-left: 1px solid #302e3c;
    margin-top: 3px;
}

.term-marks i {
    position: absolute;
    left: 0;
    width: 7px;
    height: 9px;
    background-color: #1f88b4;
}

.t1 { top: 14px; }
.t2 { top: 33px; }
.t3 { top: 43px; }
.t4 { top: 87px; }
.t5 { top: 118px; }
.t6 { top: 150px; }
.t7 { top: 181px; }
.t8 { top: 212px; }
.t9 { top: 244px; }
.t10 { top: 275px; }
.term-marks .t11 { top: 366px; background-color: #625f6c; }

/* status bar */
.status {
    height: 31px;
    flex: none;
    display: flex;
    align-items: center;
    background-color: #271d30;
    font-size: 17.2px;
    color: #a09ca6;
    white-space: nowrap;
}

.remote {
    width: 49px;
    height: 100%;
    background-color: #fb7f70;
    display: flex;
    align-items: center;
    justify-content: center;
    flex: none;
}

.remote svg {
    width: 18px;
    height: 18px;
}

.st-group {
    display: flex;
    align-items: center;
    height: 100%;
    gap: 23px;
    margin-left: 11px;
}

.st-right {
    margin-left: auto;
    padding-right: 22px;
    gap: 23px;
}

.st {
    display: flex;
    align-items: center;
    gap: 5px;
    height: 100%;
}

.st svg {
    width: 18px;
    height: 20px;
    fill: none;
    stroke: #a09ca6;
    stroke-width: 1.3;
}

.st svg.after {
    margin-left: 6px;
}

.st svg.solid {
    width: 22px;
    height: 22px;
    color: #c2bfc8;
    stroke: none;
}

.st-blame {
    margin-left: 12px;
}

.st-hover {
    width: 48px;
    justify-content: center;
    background-color: #30253a;
    margin-left: -12px;
}

.st-prettier {
    margin-left: 4px;
    gap: 7px;
}

.st-bell {
    margin-left: 4px;
}

/* matplotlib window, floats over the editor */
.figure {
    position: absolute;
    left: 556px;
    top: 121px;
    width: 808px;
    height: 871px;
    display: flex;
    flex-direction: column;
    background-color: #0c0d12;
    border-radius: 6px;
    padding: 0 4px 4px;
    box-shadow: 0 2px 6px rgba(0, 0, 0, 0.35);
}

.fig-title {
    height: 27px;
    flex: none;
    display: flex;
    align-items: center;
    justify-content: center;
    position: relative;
    padding-left: 58px;
    font-size: 13px;
    font-weight: 700;
    color: #d8d8d8;
}

.fig-dots {
    position: absolute;
    left: 12px;
    top: 9px;
    display: flex;
    gap: 8px;
}

.fig-dots i {
    width: 14px;
    height: 14px;
    border-radius: 50%;
}

.d-red {
    background-color: #f93a3a;
}

.d-purple {
    background-color: #b40adf;
}

.d-yellow {
    background-color: #f5d400;
}

.fig-tools {
    height: 39px;
    flex: none;
    display: flex;
    align-items: center;
    border-top: 1px solid #70707a;
    border-bottom: 1px solid #70707a;
    background-color: #181d2a;
    position: relative;
}

.grip {
    width: 6px;
    height: 20px;
    margin-left: 4px;
    background: repeating-linear-gradient(#5a5d68 0 2px, transparent 2px 4px);
    flex: none;
}

.tool {
    flex: none;
    margin-left: 0;
}

.t-home { width: 20px; height: 18px; margin-left: 9px; }
.t-back { width: 20px; height: 18px; margin-left: 13px; }
.t-fwd { width: 20px; height: 18px; margin-left: 12px; }
.t-move { width: 22px; height: 22px; margin-left: 20px; }
.t-zoom { width: 21px; height: 21px; margin-left: 11px; }
.t-sliders { width: 20px; height: 20px; margin-left: 12px; }
.t-chart { width: 24px; height: 20px; margin-left: 12px; }
.t-save { width: 20px; height: 20px; margin-left: 17px; }

.coords {
    margin-left: auto;
    padding-right: 4px;
    font-size: 12.3px;
    color: #b4b4b8;
}

.fig-canvas {
    width: 800px;
    height: 800px;
    flex: none;
    display: block;
    background-color: #fff;
}

.edge {
    fill: none;
    stroke: #111;
    stroke-width: 1.35;
}

.edge-box {
    fill: #fff;
}

.edge-label {
    fill: #ff2020;
    font-family: "DejaVu Sans", sans-serif;
    font-size: 14.5px;
    text-anchor: middle;
    dominant-baseline: central;
}

.node {
    fill: #add8e6;
}

.node-label {
    fill: #000;
    font-family: "DejaVu Sans", sans-serif;
    font-size: 14px;
    font-weight: 700;
    text-anchor: middle;
    dominant-baseline: central;
}
```

FILE: graph.js
```js
const NS = "http://www.w3.org/2000/svg";
const RADIUS = 16.5;
const HEAD = 11;

const nodes = {
    1: [210, 731], 2: [367, 683], 3: [563, 609], 4: [731, 597],
    5: [197, 560], 6: [360, 490], 7: [552, 433], 8: [710, 389],
    9: [152, 373], 10: [311, 296], 11: [496, 250], 12: [669, 188],
    13: [69, 235], 14: [264, 142], 15: [465, 69], 16: [580, 107]
};

// later entries cover the labels of earlier ones
const edges = [
    [1, 2, "r"], [1, 5, "r"], [1, 6, "r"], [2, 5, "r"], [2, 3, "r"], [2, 6, "r"],
    [3, 6, "r"], [2, 7, "b"], [3, 4, "r"], [3, 7, "r"], [4, 7, "r"], [3, 8, "b"],
    [4, 8, "r"], [5, 6, "r"], [5, 9, "r"], [5, 10, "r"], [6, 9, "r"], [6, 7, "r"],
    [6, 10, "r"], [7, 10, "r"], [6, 11, "b"], [7, 8, "r"], [7, 11, "b"], [8, 11, "r"],
    [7, 12, "b"], [8, 12, "b"], [9, 10, "r"], [9, 13, "r"], [10, 13, "r"], [9, 14, "b"],
    [10, 14, "r"], [10, 11, "b"], [11, 14, "r"], [10, 15, "b"], [11, 12, "b"], [11, 15, "b"],
    [11, 16, "b"], [12, 15, "b"], [12, 16, "b"], [15, 16, "b"], [14, 15, "r"], [13, 14, "r"]
];

const svg = document.getElementById("graph");

function el(name, attrs, text) {
    const item = document.createElementNS(NS, name);
    for (const key in attrs) item.setAttribute(key, attrs[key]);
    if (text) item.textContent = text;
    svg.appendChild(item);
    return item;
}

function head(x, y, angle) {
    const spread = 0.46;
    const x1 = x - HEAD * Math.cos(angle - spread);
    const y1 = y - HEAD * Math.sin(angle - spread);
    const x2 = x - HEAD * Math.cos(angle + spread);
    const y2 = y - HEAD * Math.sin(angle + spread);
    return `M${x1} ${y1}L${x} ${y}L${x2} ${y2}`;
}

function drawEdge(from, to) {
    const [ax, ay] = nodes[from];
    const [bx, by] = nodes[to];
    const angle = Math.atan2(by - ay, bx - ax);
    const dx = RADIUS * Math.cos(angle);
    const dy = RADIUS * Math.sin(angle);
    const d = `M${ax + dx} ${ay + dy}L${bx - dx} ${by - dy}`
        + head(bx - dx, by - dy, angle)
        + head(ax + dx, ay + dy, angle + Math.PI);
    el("path", { class: "edge", d: d });
}

function drawLabel(from, to, text) {
    const [ax, ay] = nodes[from];
    const [bx, by] = nodes[to];
    const mx = (ax + bx) / 2;
    const my = (ay + by) / 2;
    let deg = Math.atan2(by - ay, bx - ax) * 180 / Math.PI;
    if (deg > 90) deg -= 180;
    if (deg < -90) deg += 180;
    const turn = `rotate(${deg} ${mx} ${my})`;
    el("rect", { class: "edge-box", x: mx - 8, y: my - 10, width: 16, height: 20, rx: 3, transform: turn });
    el("text", { class: "edge-label", x: mx, y: my, transform: turn }, text);
}

edges.forEach(([a, b]) => drawEdge(a, b));
edges.forEach(([a, b, t]) => drawLabel(a, b, t));

for (const id in nodes) {
    const [x, y] = nodes[id];
    el("circle", { class: "node", cx: x, cy: y, r: 16 });
    el("text", { class: "node-label", x: x, y: y }, id);
}
```
